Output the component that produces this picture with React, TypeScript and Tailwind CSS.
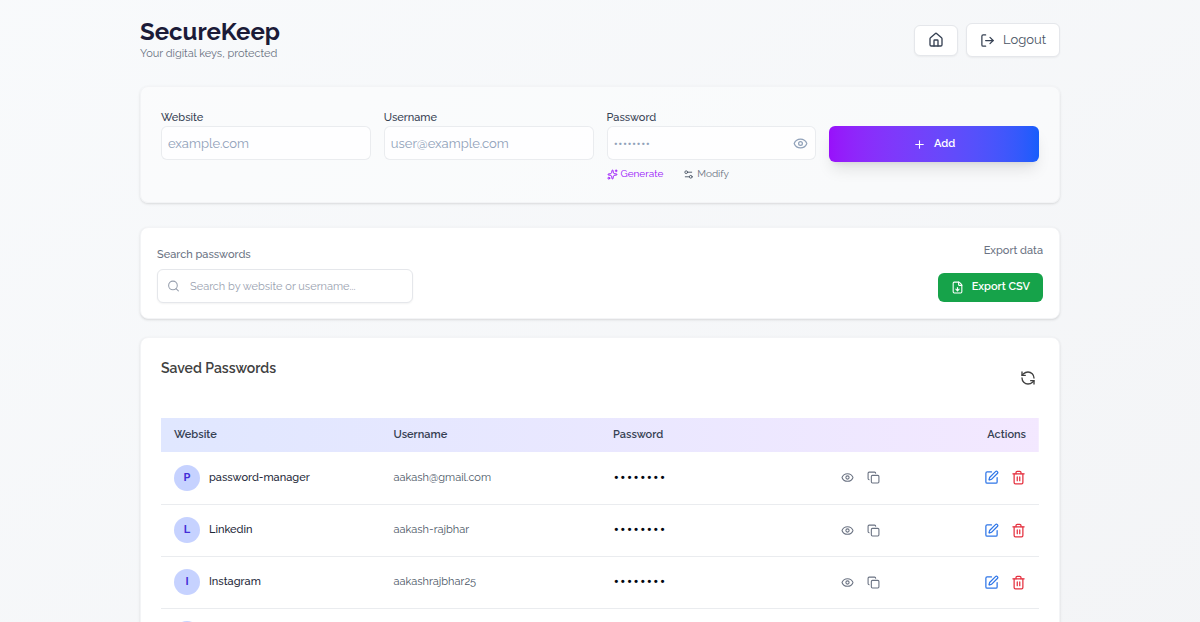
import { useState } from 'react'
import {
  Copy,
  Eye,
  FileDown,
  House,
  LogOut,
  Plus,
  RefreshCcw,
  Search,
  Settings2,
  Sparkles,
  SquarePen,
  Trash2,
} from 'lucide-react'

type Entry = { id: number; website: string; username: string; password: string }

const entries: Entry[] = [
  { id: 1, website: 'password-manager', username: 'aakash@gmail.com', password: 'hunter22' },
  { id: 2, website: 'Linkedin', username: 'aakash-rajbhar', password: 'hunter22' },
  { id: 3, website: 'Instagram', username: 'aakashrajbhar25', password: 'hunter22' },
  { id: 4, website: 'Github', username: 'aakash-rajbhar', password: 'hunter22' },
]

const inputClass =
  'h-[34px] w-full rounded-md border border-gray-200/80 bg-white/80 px-1.5 text-[13px] text-gray-800 placeholder:text-slate-400 outline-none focus:border-purple-400'

const labelClass = 'block text-[11px] leading-4 font-medium text-gray-700'

function Header() {
  return (
    <header className="flex items-center justify-between">
      <div>
        <h1 className="text-2xl leading-7 font-bold text-[#1b1b38]">SecureKeep</h1>
        <p className="text-[11px] leading-4 text-gray-500">Your digital keys, protected</p>
      </div>
      <div className="flex items-center gap-2">
        <button
          aria-label="Home"
          className="flex h-[31px] w-11 items-center justify-center rounded-md border border-gray-200 bg-white text-gray-700 shadow-xs"
        >
          <House size={16} />
        </button>
        <button className="flex h-[34px] items-center gap-2 rounded-md border border-gray-200 bg-white px-[13px] text-[13px] text-gray-600 shadow-xs">
          <LogOut size={15} className="text-gray-700" />
          Logout
        </button>
      </div>
    </header>
  )
}

function AddForm() {
  const [show, setShow] = useState(false)

  return (
    <form
      onSubmit={(e) => e.preventDefault()}
      className="mt-6 grid grid-cols-4 gap-[13px] rounded-lg border border-gray-100 bg-white/40 px-5 pt-[23px] pb-5 shadow-sm"
    >
      <div>
        <label htmlFor="website" className={labelClass}>Website</label>
        <input id="website" placeholder="example.com" className={inputClass} />
      </div>
      <div>
        <label htmlFor="username" className={labelClass}>Username</label>
        <input id="username" placeholder="user@example.com" className={inputClass} />
      </div>
      <div>
        <label htmlFor="password" className={labelClass}>Password</label>
        <div className="relative">
          <input id="password" type={show ? 'text' : 'password'} placeholder="••••••••" className={inputClass} />
          <button
            type="button"
            aria-label="Show password"
            onClick={() => setShow(!show)}
            className="absolute inset-y-0 right-2 flex items-center text-slate-400"
          >
            <Eye size={15} />
          </button>
        </div>
        <div className="mt-1.5 flex items-center gap-5 text-[10px] leading-4">
          <button type="button" className="flex items-center gap-[3px] text-purple-600">
            <Sparkles size={11} />
            Generate
          </button>
          <button type="button" className="flex items-center gap-[3px] text-gray-500">
            <Settings2 size={11} className="text-gray-600" />
            Modify
          </button>
        </div>
      </div>
      <button
        type="submit"
        className="mt-4 flex h-9 items-center justify-center gap-2 rounded-md bg-linear-to-r from-purple-600 to-blue-600 text-[11px] font-semibold text-white shadow-lg"
      >
        <Plus size={13} />
        Add
      </button>
    </form>
  )
}

function SearchBar() {
  return (
    <section className="mt-6 flex items-start justify-between rounded-lg border border-gray-100 bg-white px-4 py-[15px] shadow-sm">
      <div className="pt-1">
        <label htmlFor="search" className="block text-[11px] leading-4 font-medium text-gray-500">Search passwords</label>
        <div className="relative mt-1.5">
          <Search size={13} className="absolute top-1/2 left-2.5 -translate-y-1/2 text-gray-400" />
          <input
            id="search"
            placeholder="Search by website or username..."
            className="h-[34px] w-64 rounded-md border border-gray-200 bg-white pr-3 pl-8 text-[11px] text-gray-800 shadow-xs outline-none placeholder:text-gray-400"
          />
        </div>
      </div>
      <div className="flex flex-col items-end">
        <span className="text-[11px] leading-4 font-medium text-gray-500">Export data</span>
        <button className="mt-3.5 flex h-[29px] items-center gap-2 rounded-md bg-[#16a34a] px-[13px] text-[11px] font-semibold text-white">
          <FileDown size={13} />
          Export CSV
        </button>
      </div>
    </section>
  )
}

function EntryRow({ entry }: { entry: Entry }) {
  const [show, setShow] = useState(false)

  return (
    <tr className="h-[52px] border-b border-gray-200/80">
      <td className="px-[13px]">
        <div className="flex items-center gap-[9px]">
          <div className="flex size-[26px] items-center justify-center rounded-full bg-indigo-200 text-[11px] font-bold text-indigo-700">
            {entry.website[0].toUpperCase()}
          </div>
          <span className="text-[11px] font-medium text-gray-800">{entry.website}</span>
        </div>
      </td>
      <td className="px-[13px] text-[11px] text-gray-600">{entry.username}</td>
      <td className="px-[13px] font-['Liberation_Mono',monospace] text-[11px] font-bold text-gray-950">
        {show ? entry.password : '••••••••'}
      </td>
      <td className="pl-[21px]">
        <div className="flex items-center gap-[13px] text-gray-500">
          <button aria-label={`Show ${entry.website} password`} onClick={() => setShow(!show)}>
            <Eye size={13} />
          </button>
          <button aria-label={`Copy ${entry.website} password`}>
            <Copy size={13} />
          </button>
        </div>
      </td>
      <td className="px-[13px]">
        <div className="flex items-center justify-end gap-3">
          <button aria-label={`Edit ${entry.website}`} className="text-[#2f76e8]">
            <SquarePen size={15} />
          </button>
          <button aria-label={`Delete ${entry.website}`} className="text-[#e5303f]">
            <Trash2 size={15} />
          </button>
        </div>
      </td>
    </tr>
  )
}

function SavedPasswords() {
  return (
    <section className="mt-[18px] rounded-lg border border-gray-100 bg-white px-5 pt-[22px] pb-5 shadow-sm">
      <div className="flex items-start justify-between">
        <h2 className="text-sm leading-4 font-semibold text-neutral-700">Saved Passwords</h2>
        <button aria-label="Refresh" className="mt-2.5 mr-[3px] text-neutral-700">
          <RefreshCcw size={16} />
        </button>
      </div>
      <table className="mt-8 w-full table-fixed text-left">
        <thead>
          <tr className="h-[34px] bg-linear-to-r from-indigo-100 to-purple-100 text-[11px] text-gray-700">
            <th className="w-1/4 px-[13px] font-semibold">Website</th>
            <th className="w-1/4 px-[13px] font-semibold">Username</th>
            <th className="w-1/4 px-[13px] font-semibold">Password</th>
            <td />
            <th className="px-[13px] text-right font-semibold">Actions</th>
          </tr>
        </thead>
        <tbody>
          {entries.map((entry) => (
            <EntryRow key={entry.id} entry={entry} />
          ))}
        </tbody>
      </table>
    </section>
  )
}

export default function App() {
  return (
    <div className="min-h-screen bg-linear-to-br from-slate-50 to-gray-100 px-6 pt-[18px] pb-10 font-[Raleway,Lato,sans-serif]">
      <main className="mx-auto max-w-[920px]">
        <Header />
        <AddForm />
        <SearchBar />
        <SavedPasswords />
      </main>
    </div>
  )
}
